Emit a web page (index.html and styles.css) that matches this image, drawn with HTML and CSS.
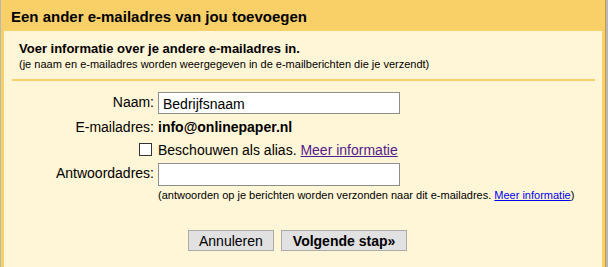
FILE: index.html
```html
<!DOCTYPE html>
<html lang="nl">

<head>
  <meta charset="UTF-8" />
  <title>E-mailadres toevoegen</title>
  <link rel="stylesheet" href="styles.css">
</head>

<body>
  <div class="dialog">
    <div class="dialog-title">Een ander e-mailadres van jou toevoegen</div>

    <div class="dialog-body">
      <div class="intro">
        <p class="intro-title">Voer informatie over je andere e-mailadres in.</p>
        <p class="intro-sub">(je naam en e-mailadres worden weergegeven in de e-mailberichten die je verzendt)</p>
      </div>

      <div class="divider"></div>

      <div class="form">
        <label class="label label-input">Naam:</label>
        <div class="field"><input class="text-input" type="text" value="Bedrijfsnaam" /></div>

        <div class="label">E-mailadres:</div>
        <div class="field value">info@onlinepaper.nl</div>

        <div class="label"><span class="checkbox"></span></div>
        <div class="field">Beschouwen als alias. <a class="link visited" href="#">Meer informatie</a></div>

        <label class="label label-input">Antwoordadres:</label>
        <div class="field">
          <input class="text-input text-input-tall" type="text" value="" />
          <p class="note">(antwoorden op je berichten worden verzonden naar dit e-mailadres. <a class="link" href="#">Meer informatie</a>)</p>
        </div>
      </div>

      <div class="buttons">
        <button class="btn">Annuleren</button>
        <button class="btn btn-primary">Volgende stap»</button>
      </div>
    </div>
  </div>
</body>

</html>
```

FILE: styles.css
```css
/* Reset */
p {
  margin: 0;
}

body {
  margin: 0;
  height: 267px;
  overflow: hidden;
  background-color: #b8b8b8;
  font-family: "Liberation Sans", Arial, sans-serif;
  font-size: 14px;
  color: #000;
}

/* Dialog frame */
.dialog {
  margin-left: 1px;
  width: 605px;
  height: 267px;
  box-sizing: border-box;
  background-color: #f9d068;
  padding: 0 3px;
  border-right: 1px solid #c49a3c;
}

.dialog-title {
  height: 31px;
  line-height: 33px;
  padding-left: 7px;
  font-size: 15px;
  font-weight: bold;
}

.dialog-body {
  background-color: #fff6d7;
  height: 236px;
}

/* Intro */
.intro {
  padding: 10px 0 0 15px;
}

.intro-title {
  font-size: 13px;
  font-weight: bold;
  line-height: 16px;
}

.intro-sub {
  font-size: 11px;
  line-height: 14px;
}

.divider {
  height: 2px;
  background-color: #f9d068;
  margin: 8px 7px 0 8px;
}

/* Form */
.form {
  display: grid;
  grid-template-columns: 150px 242px;
  column-gap: 4px;
  row-gap: 3px;
  margin-top: 11px;
}

.label {
  text-align: right;
  line-height: 20px;
}

.label-input {
  line-height: 20px;
}

.field {
  line-height: 20px;
  white-space: nowrap;
}

.value {
  font-weight: bold;
}

.text-input {
  display: block;
  width: 242px;
  height: 22px;
  box-sizing: border-box;
  margin: 0;
  padding: 1px 4px 0;
  border: 1px solid #8e8e8e;
  background-color: #fff;
  font-family: "Liberation Sans", Arial, sans-serif;
  font-size: 14px;
  color: #000;
}

.text-input-tall {
  height: 23px;
}

.checkbox {
  display: inline-block;
  width: 11px;
  height: 11px;
  border: 1px solid #333;
  background-color: #fff;
  vertical-align: -1px;
  margin-right: 2px;
}

.link {
  color: #0000ee;
  text-decoration: underline;
}

.visited {
  color: #551a8b;
}

.note {
  font-size: 11px;
  line-height: 14px;
  margin-top: 2px;
}

/* Buttons */
.buttons {
  display: flex;
  gap: 7px;
  margin-top: 28px;
  padding-left: 184px;
}

.btn {
  height: 21px;
  padding: 0 10px;
  border: 1px solid #aaa;
  background-color: #e1e1e1;
  font-family: "Liberation Sans", Arial, sans-serif;
  font-size: 14px;
  color: #000;
}

.btn-primary {
  font-weight: bold;
  padding: 0 11px;
}
```
